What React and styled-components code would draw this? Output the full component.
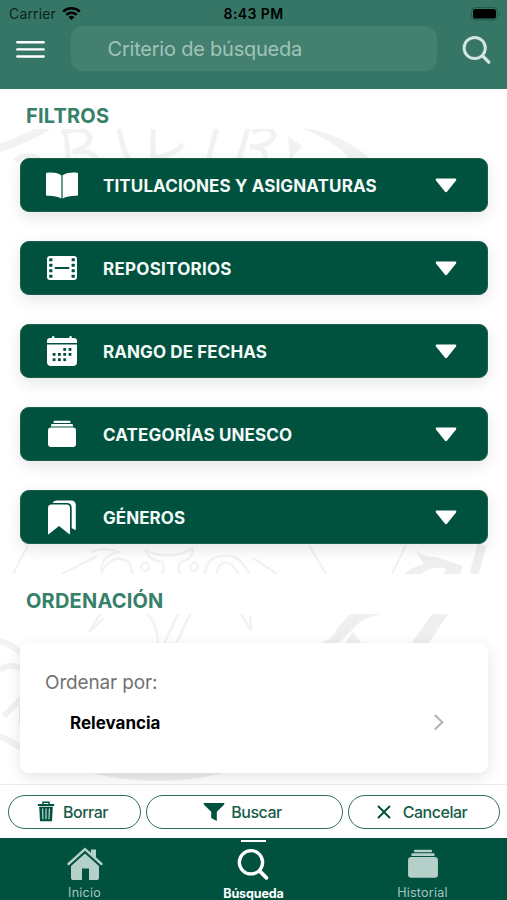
import styled, { createGlobalStyle, css } from 'styled-components';

const FILTERS = [
  { label: 'TITULACIONES Y ASIGNATURAS', icon: BookIcon, spacing: 0.12 },
  { label: 'REPOSITORIOS', icon: FilmIcon, spacing: 0.26 },
  { label: 'RANGO DE FECHAS', icon: CalendarIcon, spacing: 0.1 },
  { label: 'CATEGORÍAS UNESCO', icon: StackIcon, spacing: 0.14 },
  { label: 'GÉNEROS', icon: BookmarkIcon, spacing: 0.05 },
];

const App = () => {
  return (
    <>
      <GlobalStyle />
      <StScreen>
        <StHeader>
          <StStatusBar>
            <StCarrier>
              <span>Carrier</span>
              <WifiIcon />
            </StCarrier>
            <StClock>8:43 PM</StClock>
            <StBattery>
              <BatteryIcon />
            </StBattery>
          </StStatusBar>
          <StSearchRow>
            <StIconBtn aria-label="Menú">
              <MenuIcon />
            </StIconBtn>
            <StSearchInput>Criterio de búsqueda</StSearchInput>
            <StIconBtn aria-label="Buscar">
              <SearchIcon size={30} color="#d2e5df" />
            </StIconBtn>
          </StSearchRow>
        </StHeader>

        <StBody>
          <Watermark />
          <StContent>
            <StSectionTitle>FILTROS</StSectionTitle>
            <StFilterList>
              {FILTERS.map(({ label, icon: Icon, spacing }) => (
                <StFilter key={label}>
                  <StFilterIcon>
                    <Icon />
                  </StFilterIcon>
                  <StFilterLabel $spacing={spacing}>{label}</StFilterLabel>
                  <CaretIcon />
                </StFilter>
              ))}
            </StFilterList>
            <StSectionTitle>ORDENACIÓN</StSectionTitle>
            <StSortArea>
              <StSortCard>
                <StSortLabel>Ordenar por:</StSortLabel>
                <StSortRow>
                  <StSortValue>Relevancia</StSortValue>
                  <ChevronIcon />
                </StSortRow>
              </StSortCard>
            </StSortArea>
          </StContent>
        </StBody>

        <StActions>
          <StActionBtn $width={133} $gap={8}>
            <TrashIcon />
            <span>Borrar</span>
          </StActionBtn>
          <StActionBtn $width={197} $gap={6}>
            <FunnelIcon />
            <span>Buscar</span>
          </StActionBtn>
          <StActionBtn $width={152} $gap={12}>
            <CloseIcon />
            <span>Cancelar</span>
          </StActionBtn>
        </StActions>

        <StTabBar>
          <StTab>
            <HomeIcon />
            <StTabLabel>Inicio</StTabLabel>
          </StTab>
          <StTab $active>
            <SearchIcon size={33} color="#ffffff" />
            <StTabLabel>Búsqueda</StTabLabel>
          </StTab>
          <StTab $gap={6}>
            <StackIcon color="#b5d0c9" width={32} />
            <StTabLabel>Historial</StTabLabel>
          </StTab>
        </StTabBar>
      </StScreen>
    </>
  );
};

export default App;

function WifiIcon() {
  return (
    <svg width="19" height="15" viewBox="0 0 19 15" fill="none" stroke="#000" strokeWidth="2.5">
      <path d="M1.2 5.6a11.8 11.8 0 0 1 16.6 0" />
      <path d="M4.3 8.9a7.4 7.4 0 0 1 10.4 0" />
      <path d="M6.6 11.2a4.1 4.1 0 0 1 5.8 0L9.5 14z" fill="#000" stroke="none" />
    </svg>
  );
}

function BatteryIcon() {
  return (
    <svg width="30" height="14" viewBox="0 0 30 14">
      <rect x="0.5" y="0.5" width="26" height="12.5" rx="4" fill="none" stroke="#245b4d" />
      <rect x="2" y="2" width="23" height="9.5" rx="2.6" fill="#000" />
      <path d="M28 4.8q2 2 0 4z" fill="#245b4d" />
    </svg>
  );
}

function MenuIcon() {
  return (
    <svg width="29" height="18" viewBox="0 0 29 18" stroke="#fff" strokeWidth="2.4" strokeLinecap="round">
      <path d="M1.3 1.3h26.4M1.3 8.4h26.4M1.3 15.5h26.4" />
    </svg>
  );
}

function SearchIcon({ size, color }) {
  return (
    <svg width={size} height={size} viewBox="0 0 30 30" fill="none" stroke={color} strokeLinecap="round">
      <circle cx="12.7" cy="13" r="10.6" strokeWidth="3" />
      <path d="M20.5 20.8l6.3 6.3" strokeWidth="3.4" />
    </svg>
  );
}

function CaretIcon() {
  return (
    <svg width="22" height="15" viewBox="0 0 22 15">
      <path d="M1.6.5h18.8q1.6.3.6 1.9L12.2 13.6q-1.2 1.3-2.4 0L1 2.4Q0 .8 1.6.5z" fill="#fff" />
    </svg>
  );
}

function BookIcon() {
  return (
    <svg width="32" height="27" viewBox="0 0 32 27" fill="#fff">
      <path d="M15.4 3.2C11.5.6 6 .3 1 .7Q0 .8 0 1.8v21q0 1 1 1c5-.3 10 .3 14.4 2.8z" />
      <path d="M16.6 3.2C20.5.6 26 .3 31 .7q1 .1 1 1.1v21q0 1-1 1c-5-.3-10 .3-14.4 2.8z" />
    </svg>
  );
}

function FilmIcon() {
  const holes = [2.2, 7.7, 13.2, 18.7];
  return (
    <svg width="30" height="24" viewBox="0 0 30 24">
      <rect width="30" height="24" rx="3" fill="#fff" />
      {holes.map((y) => (
        <g key={y} fill="#00523f">
          <rect x="2.2" y={y} width="3.2" height="3.1" rx="0.6" />
          <rect x="24.6" y={y} width="3.2" height="3.1" rx="0.6" />
        </g>
      ))}
      <rect x="7.5" y="11" width="15" height="2.1" rx="1" fill="#00523f" />
    </svg>
  );
}

function CalendarIcon() {
  const dots = [
    [16.3, 12], [21.6, 12],
    [5.7, 17], [11, 17], [16.3, 17], [21.6, 17],
    [5.7, 22.3], [11, 22.3], [16.3, 22.3],
  ];
  return (
    <svg width="30" height="30" viewBox="0 0 30 30">
      <path d="M0 7V5q0-3 3-3h2V1q0-1 1.2-1t1.2 1v1h15V1q0-1 1.2-1t1.2 1v1H27q3 0 3 3v2z" fill="#fff" />
      <path d="M0 8.5h30V26q0 4-4 4H4q-4 0-4-4z" fill="#fff" />
      {dots.map(([x, y]) => (
        <rect key={`${x}-${y}`} x={x} y={y} width="2.8" height="2.8" fill="#00523f" />
      ))}
    </svg>
  );
}

function StackIcon({ color = '#fff', width = 30 }) {
  return (
    <svg width={width} height={(width * 28) / 30} viewBox="0 0 30 28" fill={color}>
      <rect x="6.5" y="0.8" width="17" height="2.3" rx="1" />
      <rect x="4" y="4" width="22" height="2.6" rx="1.2" />
      <rect x="1" y="7.5" width="28" height="19.4" rx="3" />
    </svg>
  );
}

function BookmarkIcon() {
  return (
    <svg width="30" height="35" viewBox="0 0 30 35" fill="#fff">
      <path d="M1 8q0-3.5 3.5-3.5h15Q23 4.5 23 8v25.5q0 1.2-1 .4L12 26 2 33.9q-1 .8-1-.4z" />
      <path d="M5.5 3Q6.5.5 9.5.5H24q4.800 0 4.800 4.800V29q0 1.500-1.200.7L24.700 28V8q0-5-5-5z" />
    </svg>
  );
}

function ChevronIcon() {
  return (
    <svg width="12" height="18" viewBox="0 0 12 18" fill="none" stroke="#b3b3b3" strokeWidth="2.1">
      <path d="M1.8 1.1L9.3 8.300l-7.5 7.200" />
    </svg>
  );
}

function TrashIcon() {
  return (
    <svg width="18" height="21" viewBox="0 0 18 21">
      <path d="M6 3V1.2h6V3" fill="none" stroke="#00523f" strokeWidth="1.5" />
      <rect x="0.8" y="2.9" width="16.4" height="2.1" rx="0.5" fill="#00523f" />
      <path d="M2.2 5.8h13.6l-.8 14.4H3z" fill="#00523f" />
      <path d="M5.6 7.5l.4 10.800M9 7.5v10.800M12.4 7.5L12 18.300" stroke="#d5e4df" strokeWidth="1.1" />
    </svg>
  );
}

function FunnelIcon() {
  return (
    <svg width="22" height="20" viewBox="0 0 22 20">
      <path d="M.5 1h21q0 1-1 2.2l-6.700 6.600V19L8.200 16V9.800L1.500 3.200Q.5 2 .5 1z" fill="#00523f" />
    </svg>
  );
}

function CloseIcon() {
  return (
    <svg width="14" height="14" viewBox="0 0 14 14" stroke="#00523f" strokeWidth="2" strokeLinecap="round">
      <path d="M1.5 1.5l11 11M12.5 1.5l-11 11" />
    </svg>
  );
}

function HomeIcon() {
  return (
    <svg width="36" height="34" viewBox="0 0 36 34">
      <path d="M24 2.5h5V12l-5-4.5z" fill="#b5d0c9" />
      <path d="M18 6.5L32 19v12q0 2-2 2h-8V21.5h-7V33H6q-2 0-2-2V19z" fill="#b5d0c9" />
      <path d="M1.5 18.5L18 3.5l16.5 15" fill="none" stroke="#00523f" strokeWidth="3.6" />
      <path d="M1.5 17L18 2l16.5 15" fill="none" stroke="#b5d0c9" strokeWidth="2.4" strokeLinecap="round" />
    </svg>
  );
}

// University seal behind the content, only visible between the cards
function Watermark() {
  return (
    <StWatermark viewBox="0 89 507 696" aria-hidden="true" fill="none" stroke="#f2f2f2">
      <path d="M-4 149Q24 141 48 126" strokeWidth="8" />
      <path d="M15 161q10-10 24-2" strokeWidth="5" />
      <path d="M61 131q6 2 6 14l2 18M62 132q26-6 28 6q0 8-17 14q22-3 26 12" strokeWidth="5" />
      <path d="M119 128q2 18 10 32M153 128v32M155 158q20-3 28-14" strokeWidth="5" />
      <path d="M217 127l-9 34M248 128l-9 32M252 132q20-8 22 4q-3 10-24 11q17 0 15 12" strokeWidth="5" />
      <path d="M288 136l14 10-12 14z" fill="#f2f2f2" stroke="none" />
      <path d="M301 128Q340 132 372 160h-21Q337 142 301 128z" fill="#f2f2f2" stroke="none" />
      <g strokeWidth="2.2">
        <path d="M28 545L13 574M97 556L62 574M253 558l24 16M309 545l17 29M406 545l-14 29" />
        <path d="M91 552q13-6 28 0q-20 4-17 22M101 574q10-22 28-12l4 12" />
        <path d="M145 550q25 12 48-2M145 550q4 10 17 12q4 7 0 12M193 549q0 10-12 13q-5 6 0 12" />
        <path d="M205 574q2-23 30-17q10 7 14 17M217 574q1-15 14-10l8 10" />
        <circle cx="145" cy="567" r="4" />
        <circle cx="194" cy="567" r="4" />
      </g>
      <path d="M414 548q8 10 22 9l27 9-3 8h-17l4-5q-14-4-26 5h-17q8-7 20-10z" fill="#efefef" stroke="none" />
      <path d="M482 545l-8 29" strokeWidth="9" stroke="#efefef" />
      <path d="M100 614l-11 18 15-14M241 614l10 16-1-14" strokeWidth="2.5" />
      <path d="M148 614q10 12 10 30M178 614l-14 30M190 614l-14 30" strokeWidth="2.5" />
      <path d="M350 614h32q-14 2-22 8l-21 21h-18q12-4 16-14z" fill="#efefef" stroke="none" />
      <path d="M353 632l8 11h-16zM432 614h16l-20 30h-17z" fill="#efefef" stroke="none" />
      <path d="M0 641q14 4 22 14M0 670q10-8 22-1M4 716l18-18v26M0 736l22 12" strokeWidth="6" />
      <path d="M80 770q80 22 155 0z" fill="#efefef" stroke="none" />
    </StWatermark>
  );
}

const GlobalStyle = createGlobalStyle`
  body {
    margin: 0;
    font-family: Inter, 'Liberation Sans', sans-serif;
    background-color: #ffffff;
  }
  svg {
    display: block;
    flex-shrink: 0;
  }
  button {
    font: inherit;
    padding: 0;
    cursor: pointer;
  }
`;

const StScreen = styled.div`
  width: 507px;
  height: 900px;
  display: flex;
  flex-direction: column;
  overflow: hidden;
  background-color: #ffffff;
`;

const StHeader = styled.header`
  height: 89px;
  background-color: #357666;
  box-sizing: border-box;
`;

const StStatusBar = styled.div`
  height: 26px;
  display: grid;
  grid-template-columns: 1fr auto 1fr;
  align-items: center;
  padding: 1px 6px 0 9px;
  box-sizing: border-box;
  color: #000000;
`;

const StCarrier = styled.div`
  display: flex;
  align-items: center;
  gap: 6px;
  font-size: 14px;
  letter-spacing: 0.15px;
  color: #0c241d;
`;

const StClock = styled.span`
  margin-right: 3px;
  font-size: 14px;
  font-weight: 600;
  letter-spacing: 0.4px;
`;

const StBattery = styled.div`
  display: flex;
  justify-content: flex-end;
`;

const StSearchRow = styled.div`
  height: 45px;
  display: grid;
  grid-template-columns: 29px 366px 30px;
  justify-content: space-between;
  align-items: center;
  padding: 0 15px 0 16px;
`;

const StIconBtn = styled.button`
  border: 0;
  background: none;
  padding-top: 2px;
`;

const StSearchInput = styled.div`
  height: 45px;
  display: flex;
  align-items: center;
  padding-left: 37px;
  border-radius: 12px;
  box-sizing: border-box;
  background-color: #44806f;
  color: #a0c4b8;
  font-size: 20px;
  letter-spacing: -0.22px;
`;

const StBody = styled.main`
  flex: 1;
  display: grid;
  min-height: 0;
`;

const StWatermark = styled.svg`
  grid-area: 1 / 1;
  width: 507px;
  height: 696px;
`;

const StContent = styled.div`
  grid-area: 1 / 1;
  z-index: 1;
`;

const StSectionTitle = styled.h2`
  height: 40px;
  margin: 0;
  padding: 14px 26px 0;
  box-sizing: border-box;
  background-color: #ffffff;
  color: #37806a;
  font-size: 20px;
  font-weight: 650;
  line-height: 26px;
  letter-spacing: 0.2px;
`;

const StFilterList = styled.div`
  height: 445px;
  display: flex;
  flex-direction: column;
  gap: 29px;
  padding: 29px 19px 0 20px;
  box-sizing: border-box;
`;

const StFilter = styled.button`
  height: 54px;
  display: flex;
  align-items: center;
  flex-shrink: 0;
  padding: 0 30px 0 0;
  border: 1px solid #1c604e;
  border-radius: 9px;
  background-color: #00523f;
  color: #f4faf8;
  text-align: left;
  box-shadow: 0 5px 16px rgba(0, 0, 0, 0.1);
`;

const StFilterIcon = styled.span`
  width: 82px;
  display: flex;
  justify-content: center;
  padding-right: 1px;
  box-sizing: border-box;
`;

const StFilterLabel = styled.span`
  flex: 1;
  padding-top: 1px;
  font-size: 17px;
  font-weight: 650;
  letter-spacing: ${({ $spacing }) => $spacing}px;
`;

const StSortArea = styled.div`
  height: 171px;
  padding: 29px 19px 0 20px;
  box-sizing: border-box;
`;

const StSortCard = styled.section`
  height: 130px;
  padding: 27px 43px 0 25px;
  border-radius: 9px;
  box-sizing: border-box;
  background-color: #ffffff;
  box-shadow: 0 4px 16px rgba(0, 0, 0, 0.11);
`;

const StSortLabel = styled.div`
  font-size: 19px;
  line-height: 26px;
  letter-spacing: -0.15px;
  color: #727272;
`;

const StSortRow = styled.div`
  display: flex;
  justify-content: space-between;
  align-items: center;
  padding: 14px 0 0 25px;
`;

const StSortValue = styled.span`
  font-size: 17px;
  font-weight: 700;
  line-height: 26px;
  color: #000000;
`;

const StActions = styled.div`
  height: 54px;
  display: flex;
  align-items: center;
  gap: 5px;
  padding-left: 8px;
  border-top: 1px solid #ececec;
  box-sizing: border-box;
  background-color: #ffffff;
`;

const StActionBtn = styled.button`
  width: ${({ $width }) => $width}px;
  height: 34px;
  display: flex;
  justify-content: center;
  align-items: center;
  gap: ${({ $gap }) => $gap}px;
  padding-right: 4px;
  border: 1px solid #2b6d5b;
  border-radius: 17px;
  box-sizing: border-box;
  background-color: #ffffff;
  color: #175b48;
  font-size: 16px;
  font-weight: 500;
  letter-spacing: -0.5px;
`;

const StTabBar = styled.nav`
  height: 62px;
  display: grid;
  grid-template-columns: repeat(3, 1fr);
  background-color: #00523f;
`;

const StTabLabel = styled.span`
  font-size: 12.5px;
  line-height: 15px;
  letter-spacing: 0.25px;
`;

const StTab = styled.button`
  display: flex;
  flex-direction: column;
  align-items: center;
  justify-content: flex-end;
  gap: ${({ $gap = 4 }) => $gap}px;
  border: 0;
  background: none;
  color: #a5c6bd;

  ${({ $active }) =>
    $active &&
    css`
      color: #ffffff;
      font-weight: 650;
      justify-content: space-between;
      gap: 0;

      &::before {
        content: '';
        width: 25px;
        height: 2px;
        margin-top: 2px;
        background-color: #ffffff;
      }

      ${StTabLabel} {
        line-height: 13px;
        letter-spacing: -0.1px;
      }
    `}
`;
